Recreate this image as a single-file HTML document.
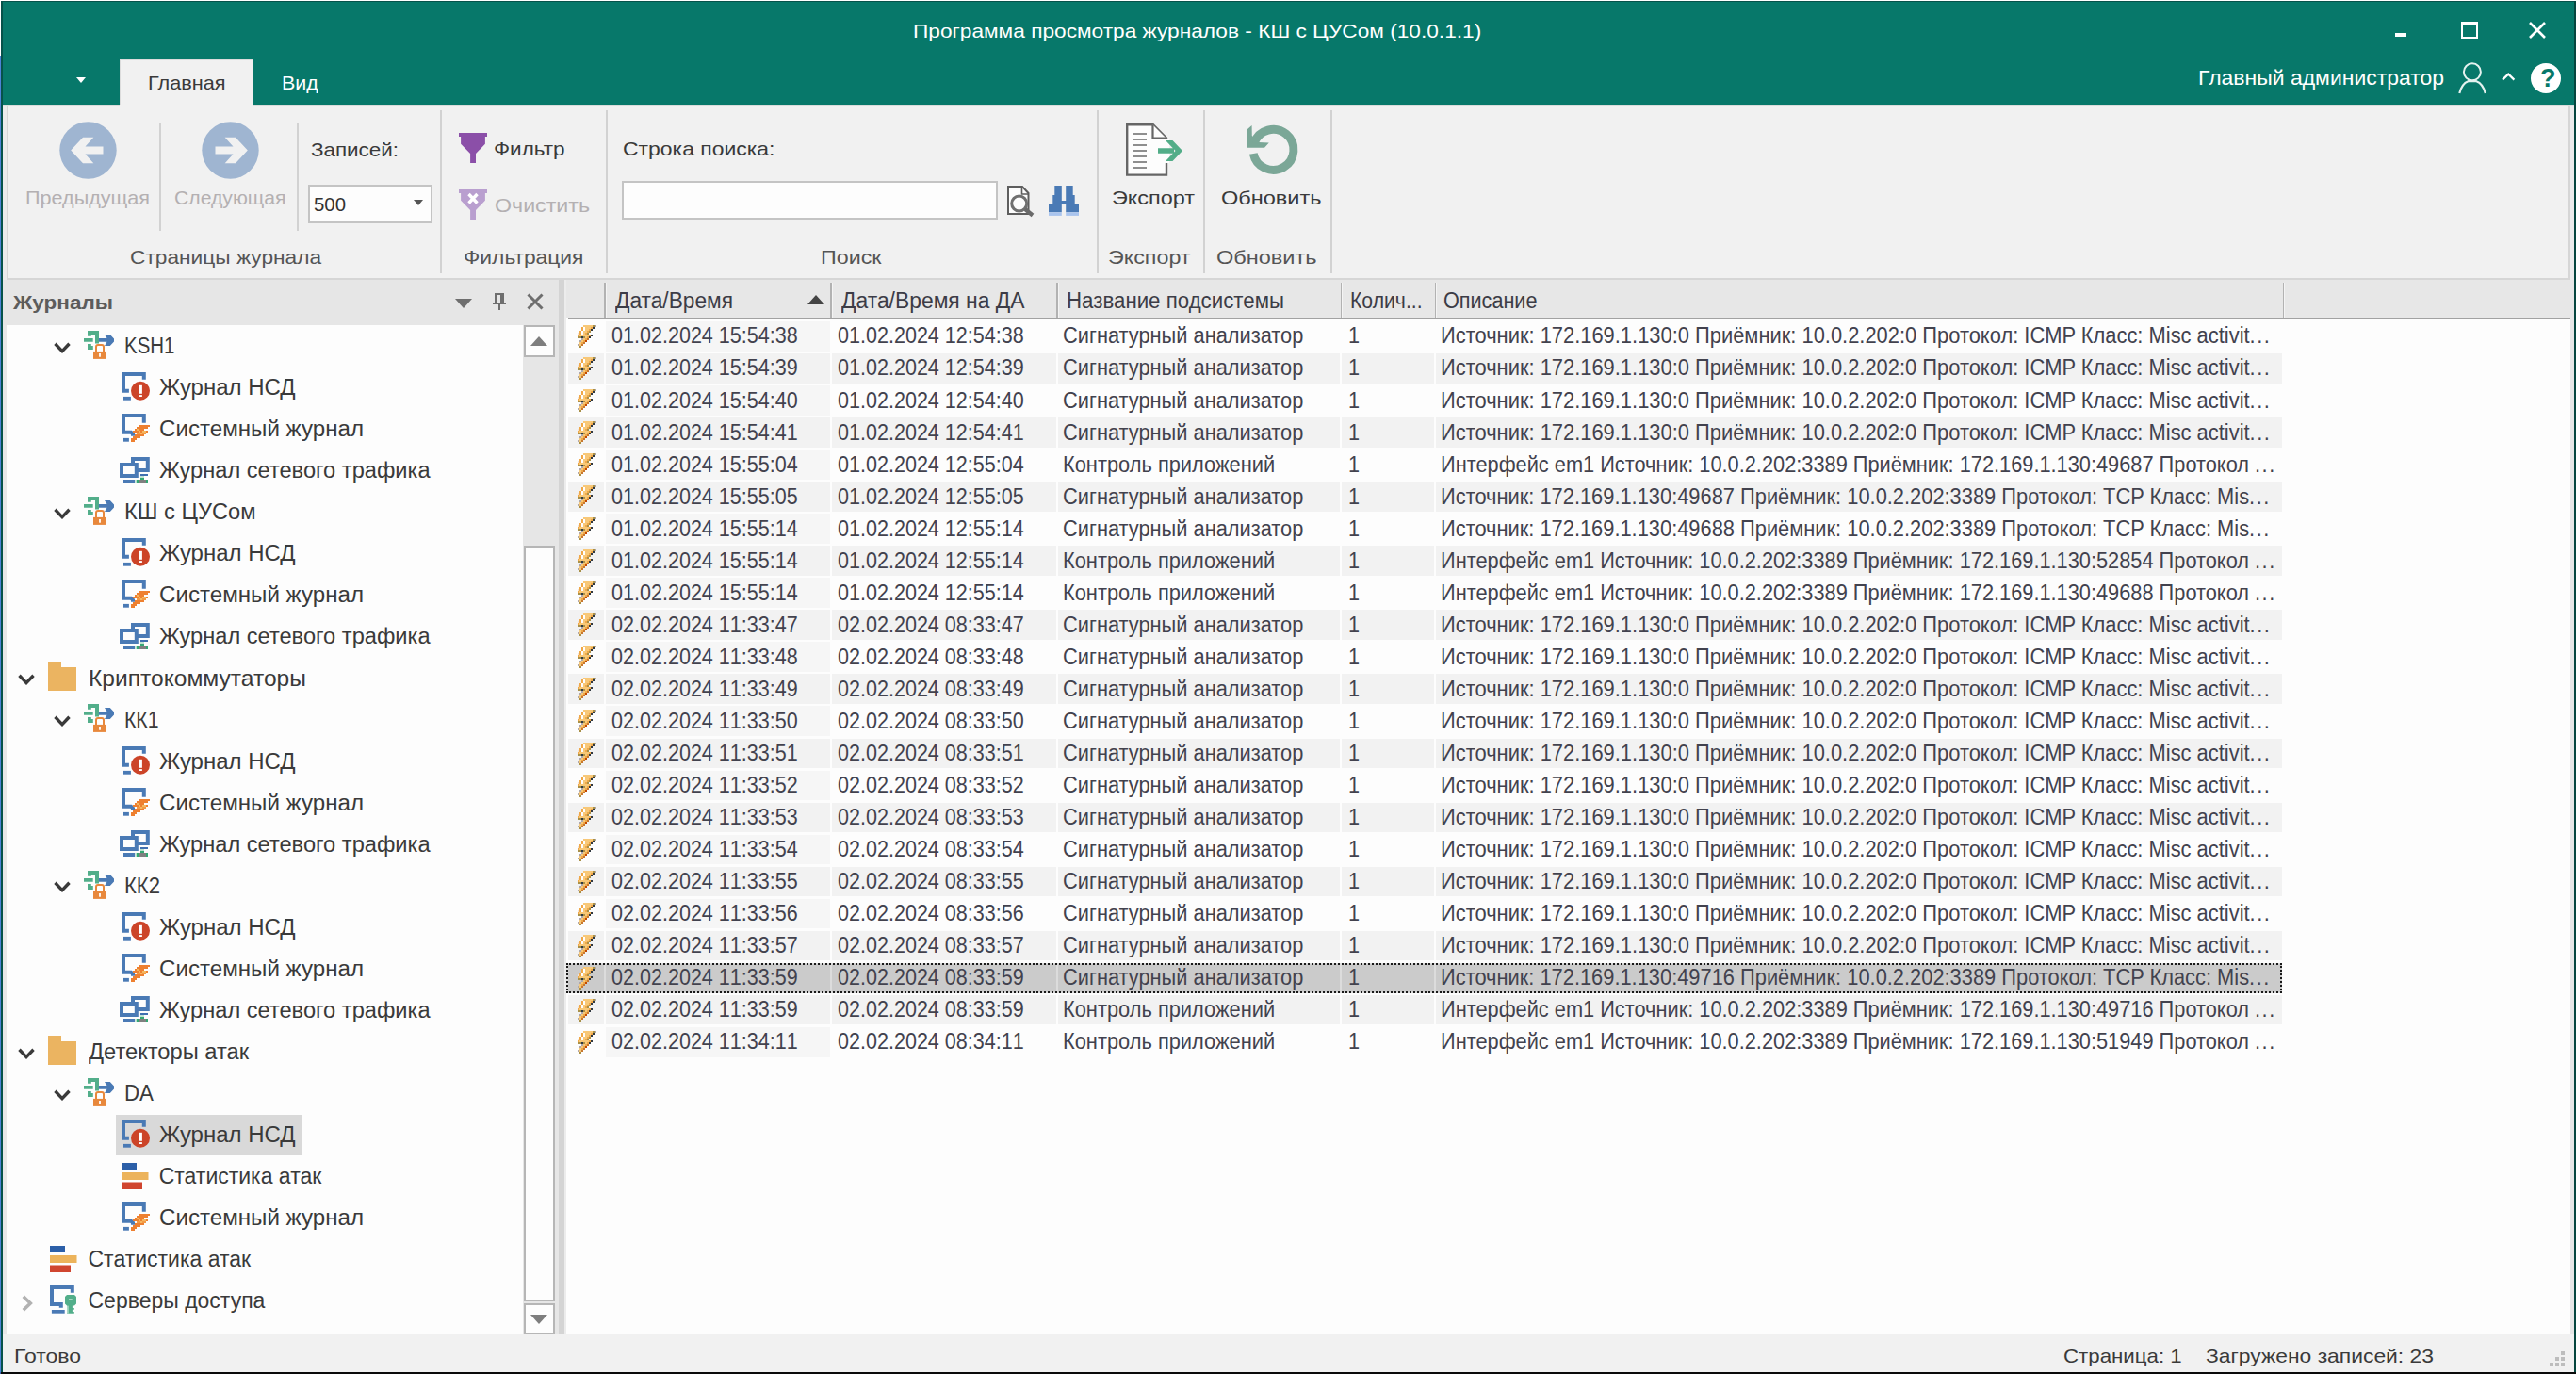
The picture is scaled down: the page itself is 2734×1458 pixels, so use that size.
<!DOCTYPE html>
<html><head><meta charset="utf-8"><title>Log viewer</title><style>html,body{margin:0;padding:0}
body{width:2734px;height:1458px;position:relative;overflow:hidden;background:#f1f1f1;font-family:"Liberation Sans",sans-serif}
body>div,body>span,body>svg{position:absolute}
.t{white-space:nowrap;line-height:1;transform-origin:0 0;display:block}
svg{overflow:visible}
</style></head><body>
<svg width="0" height="0" style="position:absolute"><defs>
<symbol id="gw" viewBox="0 0 32 32">
<path d="M4 0h12v13.600h-4V3.900H7.800v1.800H4zM0 7.900h9.700v3.900H0zM4 14.100h3.800v2h2v3.800H4z" fill="#52ae8a"/>
<path d="M15.900 7.900h8.600L22 3.900h5.800L32 8.400v3L27.800 15.900H22l2.500-4.100h-8.600z" fill="#4a7ab5"/>
<path d="M10 21.900h14v8H10z" fill="#e8883c"/>
<path d="M13 21.900v-4.800q0-2 2-2h4q2 0 2 2v4.800" fill="none" stroke="#e8883c" stroke-width="2"/>
<rect x="16.100" y="24" width="1.800" height="3.700" fill="#fff"/>
</symbol>
<symbol id="nsd" viewBox="0 0 32 32">
<path d="M23.800 7.700V2H2v17.700h5.900" fill="none" stroke="#4a7ab5" stroke-width="4"/>
<rect x="2" y="25.900" width="7.900" height="3.800" fill="#4a7ab5"/>
<circle cx="20" cy="19.800" r="10" fill="#cc4428"/>
<rect x="18.200" y="13.800" width="3.700" height="9" fill="#fff"/><rect x="18.200" y="24.100" width="3.700" height="1.900" fill="#fff"/>
</symbol>
<symbol id="sys" viewBox="0 0 32 32">
<path d="M23.800 9.700V2H2v17.700h8l2 2v2" fill="none" stroke="#4a7ab5" stroke-width="4"/>
<rect x="2" y="25.900" width="5.900" height="3.800" fill="#4a7ab5"/>
<g shape-rendering="crispEdges"><rect x="18" y="12" width="12" height="2.05" fill="#ee8030"/><rect x="16" y="14" width="12" height="2.05" fill="#ee8030"/><rect x="14" y="16" width="10" height="2.05" fill="#ee8030"/><rect x="12" y="18" width="16" height="2.05" fill="#ee8030"/><rect x="16" y="20" width="10" height="2.05" fill="#f29a45"/><rect x="14" y="22" width="10" height="2.05" fill="#ee8030"/><rect x="12" y="24" width="8" height="2.05" fill="#ee8030"/><rect x="10" y="26" width="6" height="2.05" fill="#ee8030"/><rect x="10" y="28" width="4" height="2.05" fill="#ee8030"/><rect x="18" y="18" width="2" height="2" fill="#f4b860"/><rect x="22" y="18" width="4" height="2" fill="#f4b860"/><rect x="20" y="20" width="2" height="2" fill="#f4b860"/><rect x="16" y="16" width="2" height="2" fill="#f4b860"/></g>
</symbol>
<symbol id="srv" viewBox="0 0 32 32">
<path d="M23.800 7.800V2H2v17.900h9.800v3.800" fill="none" stroke="#4a7ab5" stroke-width="4"/>
<rect x="1.900" y="26" width="13.800" height="3.700" fill="#4a7ab5"/>
<path d="M18 9.900h8l2 2v7.700l-2 2h-2.100v2.300h1.900v1.900h-1.900V28h1.900v1.700H18v-8.100l-2-2v-7.700z" fill="#52ae8a"/>
<rect x="18" y="21.600" width="1.800" height="8.100" fill="#a9d7c4"/>
<rect x="20" y="14.200" width="3.700" height="1.600" fill="#b9e0d0"/>
</symbol>
<symbol id="net" viewBox="0 0 32 28">
<rect x="14" y="2" width="15.800" height="12" fill="#fdfdfd" stroke="#4a7ab5" stroke-width="4"/>
<rect x="2" y="8" width="15.800" height="12" fill="#fdfdfd" stroke="#4a7ab5" stroke-width="4"/>
<rect x="22" y="18" width="8" height="2" fill="#3f6fb0"/>
<rect x="22" y="20" width="4" height="2" fill="#bfe3d3"/><rect x="22" y="22" width="4" height="2" fill="#35a874"/>
<rect x="4" y="24" width="12" height="4" fill="#4a7ab5"/>
<rect x="16" y="24" width="1.800" height="4" fill="#cfe9dc"/>
<rect x="17.800" y="24" width="12.200" height="4" fill="#35a874"/><rect x="20" y="24" width="8" height="4" fill="#808080"/>
</symbol>
<symbol id="fold" viewBox="0 0 30 31"><path d="M0 0h14v6h16v25H0z" fill="#ebb461"/></symbol>
<symbol id="stat" viewBox="0 0 29 28"><rect width="16" height="7" fill="#2c5fa8"/><rect y="10" width="28.5" height="8" fill="#ecb35b"/><rect y="20.5" width="22" height="7.5" fill="#d0452f"/></symbol>
<symbol id="chev" viewBox="0 0 18 12"><path d="M1.500 1.800L9 9.600 16.500 1.800" fill="none" stroke="#3a3a3a" stroke-width="3.400"/></symbol>
<symbol id="chevr" viewBox="0 0 12 18"><path d="M1.800 1.800L9.300 9 1.800 16.200" fill="none" stroke="#b2b2b2" stroke-width="3.600"/></symbol>
<symbol id="prev" viewBox="0 0 61 61"><circle cx="30.5" cy="30.5" r="30.2" fill="#9fb5d1"/><path d="M12.2 30.5L25 16.7h11.3L27.5 26.5h19v8h-19l8.8 9.8H25z" fill="#f1f1f1"/></symbol>
<symbol id="filt" viewBox="0 0 30 32"><path d="M0 0h30v3.900h-2.100v7.800L18 22v9.900h-5.900V22L2.100 11.700V3.900H0z"/></symbol>
</defs></svg>
<div style="left:0px;top:0px;width:2734px;height:1px;background:#fff;"></div>
<div style="left:0px;top:0px;width:1px;height:59px;background:#fff;"></div>
<div style="left:0px;top:59px;width:1px;height:1399px;background:#4d82d6;"></div>
<div style="left:1px;top:1px;width:2733px;height:110px;background:#06524a;"></div>
<div style="left:1px;top:1px;width:2px;height:1457px;background:#06524a;"></div>
<div style="left:2732px;top:1px;width:2px;height:1457px;background:#06463f;"></div>
<div style="left:3px;top:2px;width:2729px;height:109px;background:#07786a;"></div>
<div style="left:0px;top:1456px;width:2734px;height:2px;background:#0a0a0a;"></div>
<div style="left:0px;top:1456px;width:1px;height:2px;background:#3a66b0;"></div>
<span class=t style="left:968.5px;top:22.2px;font-size:21px;color:#fff;transform:scaleX(1.080);">Программа просмотра журналов - КШ с ЦУСом (10.0.1.1)</span>
<div style="left:2542px;top:35px;width:12px;height:4px;background:#fff;"></div>
<div style="left:2612px;top:23px;width:14px;height:12px;border:2px solid #fff;border-top-width:4px"></div>
<svg style="left:2683px;top:22px" width="20" height="20"><path d="M2 2L18 18M18 2L2 18" stroke="#fff" stroke-width="2.6" fill="none"/></svg>
<div style="left:127px;top:63px;width:142px;height:50px;background:#f1f1f1;border-top:1px solid #dcdcdc;border-left:1px solid #dcdcdc;border-right:1px solid #dcdcdc;box-sizing:border-box"></div>
<svg style="left:81px;top:81.5px" width="10" height="6"><path d="M0 0h10L5 6z" fill="#fff"/></svg>
<span class=t style="left:156.5px;top:77.2px;font-size:21px;color:#3a3a3a;transform:scaleX(1.032);">Главная</span>
<span class=t style="left:298.5px;top:77.2px;font-size:21px;color:#fff;transform:scaleX(1.020);">Вид</span>
<span class=t style="left:2333.0px;top:71.9px;font-size:22px;color:#fff;transform:scaleX(1.044);">Главный администратор</span>
<svg style="left:2608px;top:65px" width="32" height="36"><circle cx="15.9" cy="11.3" r="9" fill="none" stroke="#e4f2ef" stroke-width="2"/><path d="M2.3 34C4 27 8 22.5 11.5 21.2h8.8C24 22.5 28 27 29.8 34" fill="none" stroke="#e4f2ef" stroke-width="2.2"/></svg>
<svg style="left:2654px;top:76px" width="16" height="10"><path d="M2 8.6L8.2 2.6 14.4 8.6" fill="none" stroke="#fff" stroke-width="2.2"/></svg>
<div style="left:2686px;top:67px;width:32px;height:32px;border-radius:50%;background:#fff"></div>
<span class=t style="left:2696.0px;top:70.1px;font-size:27px;color:#07786a;font-weight:bold;">?</span>
<div style="left:3px;top:111px;width:2729px;height:186px;background:#ebebeb;"></div>
<div style="left:7px;top:111px;width:2721px;height:186px;background:#d6d6d6;"></div>
<div style="left:9px;top:111px;width:2717px;height:184px;background:#f1f1f1;"></div>
<div style="left:128px;top:111px;width:140px;height:3px;background:#f1f1f1;"></div>
<div style="left:3px;top:111px;width:124px;height:1.5px;background:#d9dcdb;"></div>
<div style="left:269px;top:111px;width:2463px;height:1.5px;background:#d9dcdb;"></div>
<svg style="left:62.5px;top:128.5px" width="61" height="61" ><use href="#prev"/></svg>
<svg style="left:214.3px;top:128.5px" width="61" height="61"><use href="#prev" transform="translate(61 0) scale(-1 1)"/></svg>
<div style="left:169px;top:131px;width:2px;height:114px;background:#d2d2d2;"></div>
<div style="left:314.5px;top:131px;width:2px;height:114px;background:#d2d2d2;"></div>
<span class=t style="left:26.5px;top:198.5px;font-size:21px;color:#b4b0b2;transform:scaleX(1.028);">Предыдущая</span>
<span class=t style="left:184.5px;top:198.5px;font-size:21px;color:#b4b0b2;transform:scaleX(1.009);">Следующая</span>
<span class=t style="left:329.5px;top:148.2px;font-size:21px;color:#3a3a3a;transform:scaleX(1.066);">Записей:</span>
<div style="left:327px;top:196px;width:128px;height:37px;background:#fdfdfd;border:2px solid #c4c4c4"></div>
<span class=t style="left:332.5px;top:206.2px;font-size:21px;color:#333;transform:scaleX(0.970);">500</span>
<svg style="left:439px;top:212px" width="10" height="6"><path d="M0 0h10L5 6z" fill="#555"/></svg>
<span class=t style="left:137.5px;top:262.2px;font-size:21px;color:#555;transform:scaleX(1.081);">Страницы журнала</span>
<div style="left:467px;top:117px;width:2px;height:173px;background:#d2d2d2;"></div>
<div style="left:643px;top:117px;width:2px;height:173px;background:#d2d2d2;"></div>
<div style="left:1163.5px;top:117px;width:2px;height:173px;background:#d2d2d2;"></div>
<div style="left:1277px;top:117px;width:2px;height:173px;background:#d2d2d2;"></div>
<div style="left:1412px;top:117px;width:2px;height:173px;background:#d2d2d2;"></div>
<svg style="left:487px;top:141px" width="30" height="32"><use href="#filt" fill="#8b4fa8"/></svg>
<svg style="left:487px;top:201px" width="30" height="32"><use href="#filt" fill="#b99fcf"/><path d="M10.5 5l9 9.5M19.5 5l-9 9.5" stroke="#fff" stroke-width="3.4"/></svg>
<span class=t style="left:523.7px;top:146.9px;font-size:21px;color:#3a3a3a;transform:scaleX(1.072);">Фильтр</span>
<span class=t style="left:524.5px;top:206.8px;font-size:21px;color:#b4b0b2;transform:scaleX(1.105);">Очистить</span>
<span class=t style="left:491.5px;top:262.2px;font-size:21px;color:#555;transform:scaleX(1.086);">Фильтрация</span>
<span class=t style="left:660.5px;top:146.7px;font-size:21px;color:#3a3a3a;transform:scaleX(1.093);">Строка поиска:</span>
<div style="left:659.5px;top:191.5px;width:395.5px;height:37px;background:#fdfdfd;border:2px solid #c4c4c4"></div>
<svg style="left:1068px;top:196px" width="32" height="36"><path d="M2 2h15l6.5 7v22H2z" fill="#fdfdfd" stroke="#5e5e5e" stroke-width="2"/><path d="M16.5 2.5v7.5h7" fill="none" stroke="#5e5e5e" stroke-width="1.6"/><circle cx="13.700" cy="20" r="8" fill="#fdfdfd" stroke="#707070" stroke-width="3"/><path d="M20 26l8 6.500" stroke="#6a6a6a" stroke-width="4.200"/></svg>
<svg style="left:1113px;top:197px" width="32" height="32"><path d="M6.3 0h7.5v16h4.4V0h7.5v10h2v10h4.3v8.3H18.2V20h-4.4v8.3H0V20h4.3V10h2z" fill="#4a7ab5"/><rect y="28.3" width="13.8" height="3.6" fill="#a9c4ee"/><rect x="18.2" y="28.3" width="13.8" height="3.6" fill="#a9c4ee"/></svg>
<span class=t style="left:870.5px;top:262.2px;font-size:21px;color:#555;transform:scaleX(1.108);">Поиск</span>
<svg style="left:1195px;top:131px" width="62" height="57"><path d="M1.2 1.2h27.6L43 15.5V54.600H1.2z" fill="#fdfdfd" stroke="#666" stroke-width="2.4"/><path d="M28.5 1.5V15.5H42.5" fill="#fdfdfd" stroke="#666" stroke-width="2.2"/><rect x="40" y="17" width="6" height="25" fill="#fdfdfd"/><rect x="8" y="10" width="14" height="2" fill="#8e8e8e"/><rect x="8" y="16" width="14" height="2" fill="#8e8e8e"/><rect x="8" y="22" width="14" height="2" fill="#8e8e8e"/><rect x="8" y="28" width="14" height="2" fill="#8e8e8e"/><rect x="8" y="34" width="14" height="2" fill="#8e8e8e"/><rect x="8" y="40" width="14" height="2" fill="#8e8e8e"/><rect x="8" y="46" width="14" height="2" fill="#8e8e8e"/><path d="M34 26.2h17v5.6H34z M42 18h7.5L60 29 49.500 40H42l10.500-11z" fill="#52ad88"/></svg>
<span class=t style="left:1179.5px;top:198.7px;font-size:21px;color:#3a3a3a;transform:scaleX(1.115);">Экспорт</span>
<span class=t style="left:1175.5px;top:262.2px;font-size:21px;color:#555;transform:scaleX(1.109);">Экспорт</span>
<svg style="left:1323px;top:133px" width="56" height="53"><path d="M0.200 4.700L5.600 -0.100 5.800 11 13 18 23.800 18.500 19 23.800H0.200z" fill="#7ba797"/><path d="M8.150 18.530A21.550 21.550 0 1 1 7.250 30" fill="none" stroke="#7ba797" stroke-width="8.900"/></svg>
<span class=t style="left:1295.5px;top:198.7px;font-size:21px;color:#3a3a3a;transform:scaleX(1.120);">Обновить</span>
<span class=t style="left:1291.0px;top:262.2px;font-size:21px;color:#555;transform:scaleX(1.120);">Обновить</span>
<div style="left:3px;top:297px;width:4px;height:1119px;background:#e8e8e8;"></div>
<div style="left:3px;top:297px;width:590px;height:48px;background:#e6e6e6;"></div>
<span class=t style="left:13.5px;top:310.2px;font-size:21px;color:#5c5c5c;transform:scaleX(1.072);font-weight:bold;">Журналы</span>
<svg style="left:483px;top:317px" width="18" height="10"><path d="M0 0h18L9 10z" fill="#6e6e6e"/></svg>
<svg style="left:523px;top:311px" width="14" height="18"><path d="M2 0h10v10.200h2v1.800H8v6H6v-6H0v-1.800h2zM4 2v8.200h4V2z" fill="#6e6e6e"/></svg>
<svg style="left:559px;top:311px" width="18" height="18"><path d="M1.5 1.5L16.500 16.500M16.500 1.500L1.500 16.500" stroke="#6e6e6e" stroke-width="3"/></svg>
<div style="left:7px;top:345px;width:548px;height:1071px;background:#fdfdfd;"></div>
<div style="left:555px;top:345px;width:38px;height:1071px;background:#e6e6e6;"></div>
<div style="left:555.5px;top:345px;width:29.500px;height:30px;background:#fdfdfd;border:2px solid #b6b6b6"></div>
<svg style="left:563px;top:357px" width="18" height="10"><path d="M0 10h18L9 0z" fill="#7e7e7e"/></svg>
<div style="left:555.5px;top:579px;width:29.500px;height:798px;background:#fdfdfd;border:2px solid #b6b6b6"></div>
<div style="left:555.5px;top:1383px;width:29.500px;height:29px;background:#fdfdfd;border:2px solid #b6b6b6"></div>
<svg style="left:563px;top:1395px" width="18" height="10"><path d="M0 0h18L9 10z" fill="#7e7e7e"/></svg>
<div style="left:593px;top:297px;width:6px;height:1119px;background:#d4d4d4;"></div>
<div style="left:599px;top:297px;width:2px;height:1119px;background:#ececec;"></div>
<svg style="left:57px;top:362.9px" width="18" height="12" ><use href="#chev"/></svg>
<svg style="left:89px;top:351.1px" width="32" height="32" ><use href="#gw"/></svg>
<span class=t style="left:131.7px;top:356.1px;font-size:23px;color:#3a3a3a;transform:scaleX(0.890);">KSH1</span>
<svg style="left:129px;top:395.14000000000004px" width="32" height="32" ><use href="#nsd"/></svg>
<span class=t style="left:168.7px;top:400.2px;font-size:23px;color:#3a3a3a;transform:scaleX(1.043);">Журнал НСД</span>
<svg style="left:129px;top:439.18px" width="32" height="32" ><use href="#sys"/></svg>
<span class=t style="left:168.7px;top:444.2px;font-size:23px;color:#3a3a3a;transform:scaleX(1.049);">Системный журнал</span>
<svg style="left:127px;top:484.92px" width="32" height="28" ><use href="#net"/></svg>
<span class=t style="left:168.7px;top:488.3px;font-size:23px;color:#3a3a3a;transform:scaleX(1.027);">Журнал сетевого трафика</span>
<svg style="left:57px;top:539.06px" width="18" height="12" ><use href="#chev"/></svg>
<svg style="left:89px;top:527.26px" width="32" height="32" ><use href="#gw"/></svg>
<span class=t style="left:131.7px;top:532.3px;font-size:23px;color:#3a3a3a;transform:scaleX(1.029);">КШ с ЦУСом</span>
<svg style="left:129px;top:571.3000000000001px" width="32" height="32" ><use href="#nsd"/></svg>
<span class=t style="left:168.7px;top:576.3px;font-size:23px;color:#3a3a3a;transform:scaleX(1.043);">Журнал НСД</span>
<svg style="left:129px;top:615.34px" width="32" height="32" ><use href="#sys"/></svg>
<span class=t style="left:168.7px;top:620.4px;font-size:23px;color:#3a3a3a;transform:scaleX(1.049);">Системный журнал</span>
<svg style="left:127px;top:661.0799999999999px" width="32" height="28" ><use href="#net"/></svg>
<span class=t style="left:168.7px;top:664.4px;font-size:23px;color:#3a3a3a;transform:scaleX(1.027);">Журнал сетевого трафика</span>
<svg style="left:19px;top:715.2199999999999px" width="18" height="12" ><use href="#chev"/></svg>
<svg style="left:51px;top:702.2199999999999px" width="30" height="31" ><use href="#fold"/></svg>
<span class=t style="left:93.5px;top:708.5px;font-size:23px;color:#3a3a3a;transform:scaleX(1.069);">Криптокоммутаторы</span>
<svg style="left:57px;top:759.26px" width="18" height="12" ><use href="#chev"/></svg>
<svg style="left:89px;top:747.46px" width="32" height="32" ><use href="#gw"/></svg>
<span class=t style="left:131.7px;top:752.5px;font-size:23px;color:#3a3a3a;transform:scaleX(0.922);">КК1</span>
<svg style="left:129px;top:791.5px" width="32" height="32" ><use href="#nsd"/></svg>
<span class=t style="left:168.7px;top:796.5px;font-size:23px;color:#3a3a3a;transform:scaleX(1.043);">Журнал НСД</span>
<svg style="left:129px;top:835.5400000000001px" width="32" height="32" ><use href="#sys"/></svg>
<span class=t style="left:168.7px;top:840.6px;font-size:23px;color:#3a3a3a;transform:scaleX(1.049);">Системный журнал</span>
<svg style="left:127px;top:881.28px" width="32" height="28" ><use href="#net"/></svg>
<span class=t style="left:168.7px;top:884.6px;font-size:23px;color:#3a3a3a;transform:scaleX(1.027);">Журнал сетевого трафика</span>
<svg style="left:57px;top:935.42px" width="18" height="12" ><use href="#chev"/></svg>
<svg style="left:89px;top:923.62px" width="32" height="32" ><use href="#gw"/></svg>
<span class=t style="left:131.7px;top:928.7px;font-size:23px;color:#3a3a3a;transform:scaleX(0.960);">КК2</span>
<svg style="left:129px;top:967.66px" width="32" height="32" ><use href="#nsd"/></svg>
<span class=t style="left:168.7px;top:972.7px;font-size:23px;color:#3a3a3a;transform:scaleX(1.043);">Журнал НСД</span>
<svg style="left:129px;top:1011.6999999999999px" width="32" height="32" ><use href="#sys"/></svg>
<span class=t style="left:168.7px;top:1016.7px;font-size:23px;color:#3a3a3a;transform:scaleX(1.049);">Системный журнал</span>
<svg style="left:127px;top:1057.4399999999998px" width="32" height="28" ><use href="#net"/></svg>
<span class=t style="left:168.7px;top:1060.8px;font-size:23px;color:#3a3a3a;transform:scaleX(1.027);">Журнал сетевого трафика</span>
<svg style="left:19px;top:1111.58px" width="18" height="12" ><use href="#chev"/></svg>
<svg style="left:51px;top:1098.58px" width="30" height="31" ><use href="#fold"/></svg>
<span class=t style="left:93.5px;top:1104.8px;font-size:23px;color:#3a3a3a;transform:scaleX(1.029);">Детекторы атак</span>
<svg style="left:57px;top:1155.6200000000001px" width="18" height="12" ><use href="#chev"/></svg>
<svg style="left:89px;top:1143.82px" width="32" height="32" ><use href="#gw"/></svg>
<span class=t style="left:131.7px;top:1148.9px;font-size:23px;color:#3a3a3a;transform:scaleX(0.970);">DA</span>
<div style="left:123px;top:1182.66px;width:198px;height:43px;background:#d9d9d9;"></div>
<svg style="left:129px;top:1187.86px" width="32" height="32" ><use href="#nsd"/></svg>
<span class=t style="left:168.7px;top:1192.9px;font-size:23px;color:#3a3a3a;transform:scaleX(1.043);">Журнал НСД</span>
<svg style="left:129px;top:1234.1px" width="29" height="28" ><use href="#stat"/></svg>
<span class=t style="left:168.7px;top:1236.9px;font-size:23px;color:#3a3a3a;">Статистика атак</span>
<svg style="left:129px;top:1275.94px" width="32" height="32" ><use href="#sys"/></svg>
<span class=t style="left:168.7px;top:1281.0px;font-size:23px;color:#3a3a3a;transform:scaleX(1.049);">Системный журнал</span>
<svg style="left:53px;top:1322.18px" width="29" height="28" ><use href="#stat"/></svg>
<span class=t style="left:93.5px;top:1325.0px;font-size:23px;color:#3a3a3a;">Статистика атак</span>
<svg style="left:23px;top:1374.3200000000002px" width="12" height="18" ><use href="#chevr"/></svg>
<svg style="left:53.1px;top:1364.02px" width="32" height="32" ><use href="#srv"/></svg>
<span class=t style="left:93.5px;top:1369.1px;font-size:23px;color:#3a3a3a;">Серверы доступа</span>
<div style="left:601px;top:297px;width:2127px;height:1119px;background:#fdfdfd;"></div>
<div style="left:2728px;top:297px;width:4px;height:1119px;background:#e6e6e6;"></div>
<div style="left:601px;top:297px;width:2127px;height:40px;background:#e7e7e7;"></div>
<div style="left:603px;top:337px;width:2125px;height:2px;background:#a2a2a2;"></div>
<div style="left:641px;top:300px;width:1.5px;height:37px;background:#b2b2b2;"></div>
<div style="left:642.5px;top:300px;width:1px;height:37px;background:#f4f4f4;"></div>
<div style="left:881px;top:300px;width:1.5px;height:37px;background:#b2b2b2;"></div>
<div style="left:882.5px;top:300px;width:1px;height:37px;background:#f4f4f4;"></div>
<div style="left:1121px;top:300px;width:1.5px;height:37px;background:#b2b2b2;"></div>
<div style="left:1122.5px;top:300px;width:1px;height:37px;background:#f4f4f4;"></div>
<div style="left:1422.5px;top:300px;width:1.5px;height:37px;background:#b2b2b2;"></div>
<div style="left:1424.0px;top:300px;width:1px;height:37px;background:#f4f4f4;"></div>
<div style="left:1522.5px;top:300px;width:1.5px;height:37px;background:#b2b2b2;"></div>
<div style="left:1524.0px;top:300px;width:1px;height:37px;background:#f4f4f4;"></div>
<div style="left:2422.5px;top:300px;width:1.5px;height:37px;background:#b2b2b2;"></div>
<div style="left:2424.0px;top:300px;width:1px;height:37px;background:#f4f4f4;"></div>
<span class=t style="left:652.5px;top:307.5px;font-size:23px;color:#3c3c46;transform:scaleX(0.988);">Дата/Время</span>
<span class=t style="left:892.5px;top:307.5px;font-size:23px;color:#3c3c46;transform:scaleX(0.994);">Дата/Время на ДА</span>
<span class=t style="left:1132.0px;top:307.5px;font-size:23px;color:#3c3c46;transform:scaleX(0.968);">Название подсистемы</span>
<span class=t style="left:1433.0px;top:307.5px;font-size:23px;color:#3c3c46;transform:scaleX(0.921);">Колич...</span>
<span class=t style="left:1532.0px;top:307.5px;font-size:23px;color:#3c3c46;transform:scaleX(0.940);">Описание</span>
<svg style="left:857px;top:313px" width="18" height="10"><path d="M0 10h18L9 0z" fill="#444"/></svg>
<svg width="0" height="0" style="position:absolute"><defs><symbol id="bolt" viewBox="0 0 20 24" shape-rendering="crispEdges"><rect x="6" y="0" width="2" height="2" fill="#f8c878"/><rect x="8" y="0" width="2" height="2" fill="#f8c878"/><rect x="10" y="0" width="2" height="2" fill="#f8c878"/><rect x="12" y="0" width="2" height="2" fill="#f8c878"/><rect x="14" y="0" width="2" height="2" fill="#f8c878"/><rect x="16" y="0" width="2" height="2" fill="#a89048"/><rect x="18" y="0" width="2" height="2" fill="#b0a8a8"/><rect x="4" y="2" width="2" height="2" fill="#f0a848"/><rect x="6" y="2" width="2" height="2" fill="#ffffff"/><rect x="8" y="2" width="2" height="2" fill="#f8c878"/><rect x="10" y="2" width="2" height="2" fill="#f8c878"/><rect x="12" y="2" width="2" height="2" fill="#f8c878"/><rect x="14" y="2" width="2" height="2" fill="#f0a848"/><rect x="16" y="2" width="2" height="2" fill="#303840"/><rect x="4" y="4" width="2" height="2" fill="#f0a848"/><rect x="6" y="4" width="2" height="2" fill="#ffffff"/><rect x="8" y="4" width="2" height="2" fill="#f8c878"/><rect x="10" y="4" width="2" height="2" fill="#f8c878"/><rect x="12" y="4" width="2" height="2" fill="#f0a848"/><rect x="14" y="4" width="2" height="2" fill="#303840"/><rect x="2" y="6" width="2" height="2" fill="#f0a848"/><rect x="4" y="6" width="2" height="2" fill="#ffffff"/><rect x="6" y="6" width="2" height="2" fill="#f8c878"/><rect x="8" y="6" width="2" height="2" fill="#f8c878"/><rect x="10" y="6" width="2" height="2" fill="#f0a848"/><rect x="12" y="6" width="2" height="2" fill="#a89048"/><rect x="0" y="8" width="2" height="2" fill="#f3e4d4"/><rect x="2" y="8" width="2" height="2" fill="#f0a848"/><rect x="4" y="8" width="2" height="2" fill="#ffffff"/><rect x="6" y="8" width="2" height="2" fill="#f8c878"/><rect x="8" y="8" width="2" height="2" fill="#f0a848"/><rect x="10" y="8" width="2" height="2" fill="#a89048"/><rect x="0" y="10" width="2" height="2" fill="#f0a848"/><rect x="2" y="10" width="2" height="2" fill="#f8c878"/><rect x="4" y="10" width="2" height="2" fill="#f8c878"/><rect x="6" y="10" width="2" height="2" fill="#f8c878"/><rect x="8" y="10" width="2" height="2" fill="#f8c878"/><rect x="10" y="10" width="2" height="2" fill="#f8c878"/><rect x="12" y="10" width="2" height="2" fill="#f0a848"/><rect x="14" y="10" width="2" height="2" fill="#303840"/><rect x="0" y="12" width="2" height="2" fill="#a89048"/><rect x="2" y="12" width="2" height="2" fill="#a89048"/><rect x="4" y="12" width="2" height="2" fill="#303840"/><rect x="6" y="12" width="2" height="2" fill="#a89048"/><rect x="8" y="12" width="2" height="2" fill="#f8c878"/><rect x="10" y="12" width="2" height="2" fill="#f0a848"/><rect x="12" y="12" width="2" height="2" fill="#303840"/><rect x="4" y="14" width="2" height="2" fill="#b0a8a8"/><rect x="6" y="14" width="2" height="2" fill="#f8c878"/><rect x="8" y="14" width="2" height="2" fill="#f0a848"/><rect x="10" y="14" width="2" height="2" fill="#c87830"/><rect x="2" y="16" width="2" height="2" fill="#b0a8a8"/><rect x="4" y="16" width="2" height="2" fill="#f8c878"/><rect x="6" y="16" width="2" height="2" fill="#f0a848"/><rect x="8" y="16" width="2" height="2" fill="#c04800"/><rect x="2" y="18" width="2" height="2" fill="#f8c878"/><rect x="4" y="18" width="2" height="2" fill="#f0a848"/><rect x="6" y="18" width="2" height="2" fill="#c87830"/><rect x="0" y="20" width="2" height="2" fill="#b0a8a8"/><rect x="2" y="20" width="2" height="2" fill="#f8c878"/><rect x="4" y="20" width="2" height="2" fill="#c87830"/><rect x="2" y="22" width="2" height="2" fill="#a89048"/></symbol></defs></svg>
<div style="left:643px;top:340.95px;width:238px;height:31.6px;background:#f6f6f6;"></div>
<svg style="left:613px;top:344.95px" width="20" height="24" ><use href="#bolt"/></svg>
<span class=t style="left:648.5px;top:345.4px;font-size:23px;color:#42424e;transform:scaleX(0.937);font-kerning:none;">01.02.2024 15:54:38</span>
<span class=t style="left:888.5px;top:345.4px;font-size:23px;color:#42424e;transform:scaleX(0.937);font-kerning:none;">01.02.2024 12:54:38</span>
<span class=t style="left:1127.8px;top:345.4px;font-size:23px;color:#42424e;transform:scaleX(0.948);">Сигнатурный анализатор</span>
<span class=t style="left:1430.5px;top:345.4px;font-size:23px;color:#42424e;transform:scaleX(0.940);">1</span>
<span class=t style="left:1529.0px;top:345.4px;font-size:23px;color:#42424e;transform:scaleX(0.952);">Источник: 172.169.1.130:0 Приёмник: 10.0.2.202:0 Протокол: ICMP Класс: Misc activit<span style="letter-spacing:1.6px">...</span></span>
<div style="left:603px;top:374.995px;width:38px;height:31.6px;background:#f2f2f2;"></div>
<div style="left:643px;top:374.995px;width:238px;height:31.6px;background:#f2f2f2;"></div>
<div style="left:883px;top:374.995px;width:238px;height:31.6px;background:#f2f2f2;"></div>
<div style="left:1123px;top:374.995px;width:299px;height:31.6px;background:#f2f2f2;"></div>
<div style="left:1424px;top:374.995px;width:98px;height:31.6px;background:#f2f2f2;"></div>
<div style="left:1524px;top:374.995px;width:898px;height:31.6px;background:#f2f2f2;"></div>
<svg style="left:613px;top:378.995px" width="20" height="24" ><use href="#bolt"/></svg>
<span class=t style="left:648.5px;top:379.4px;font-size:23px;color:#42424e;transform:scaleX(0.937);font-kerning:none;">01.02.2024 15:54:39</span>
<span class=t style="left:888.5px;top:379.4px;font-size:23px;color:#42424e;transform:scaleX(0.937);font-kerning:none;">01.02.2024 12:54:39</span>
<span class=t style="left:1127.8px;top:379.4px;font-size:23px;color:#42424e;transform:scaleX(0.948);">Сигнатурный анализатор</span>
<span class=t style="left:1430.5px;top:379.4px;font-size:23px;color:#42424e;transform:scaleX(0.940);">1</span>
<span class=t style="left:1529.0px;top:379.4px;font-size:23px;color:#42424e;transform:scaleX(0.952);">Источник: 172.169.1.130:0 Приёмник: 10.0.2.202:0 Протокол: ICMP Класс: Misc activit<span style="letter-spacing:1.6px">...</span></span>
<div style="left:643px;top:409.03999999999996px;width:238px;height:31.6px;background:#f6f6f6;"></div>
<svg style="left:613px;top:413.03999999999996px" width="20" height="24" ><use href="#bolt"/></svg>
<span class=t style="left:648.5px;top:413.5px;font-size:23px;color:#42424e;transform:scaleX(0.937);font-kerning:none;">01.02.2024 15:54:40</span>
<span class=t style="left:888.5px;top:413.5px;font-size:23px;color:#42424e;transform:scaleX(0.937);font-kerning:none;">01.02.2024 12:54:40</span>
<span class=t style="left:1127.8px;top:413.5px;font-size:23px;color:#42424e;transform:scaleX(0.948);">Сигнатурный анализатор</span>
<span class=t style="left:1430.5px;top:413.5px;font-size:23px;color:#42424e;transform:scaleX(0.940);">1</span>
<span class=t style="left:1529.0px;top:413.5px;font-size:23px;color:#42424e;transform:scaleX(0.952);">Источник: 172.169.1.130:0 Приёмник: 10.0.2.202:0 Протокол: ICMP Класс: Misc activit<span style="letter-spacing:1.6px">...</span></span>
<div style="left:603px;top:443.085px;width:38px;height:31.6px;background:#f2f2f2;"></div>
<div style="left:643px;top:443.085px;width:238px;height:31.6px;background:#f2f2f2;"></div>
<div style="left:883px;top:443.085px;width:238px;height:31.6px;background:#f2f2f2;"></div>
<div style="left:1123px;top:443.085px;width:299px;height:31.6px;background:#f2f2f2;"></div>
<div style="left:1424px;top:443.085px;width:98px;height:31.6px;background:#f2f2f2;"></div>
<div style="left:1524px;top:443.085px;width:898px;height:31.6px;background:#f2f2f2;"></div>
<svg style="left:613px;top:447.085px" width="20" height="24" ><use href="#bolt"/></svg>
<span class=t style="left:648.5px;top:447.5px;font-size:23px;color:#42424e;transform:scaleX(0.937);font-kerning:none;">01.02.2024 15:54:41</span>
<span class=t style="left:888.5px;top:447.5px;font-size:23px;color:#42424e;transform:scaleX(0.937);font-kerning:none;">01.02.2024 12:54:41</span>
<span class=t style="left:1127.8px;top:447.5px;font-size:23px;color:#42424e;transform:scaleX(0.948);">Сигнатурный анализатор</span>
<span class=t style="left:1430.5px;top:447.5px;font-size:23px;color:#42424e;transform:scaleX(0.940);">1</span>
<span class=t style="left:1529.0px;top:447.5px;font-size:23px;color:#42424e;transform:scaleX(0.952);">Источник: 172.169.1.130:0 Приёмник: 10.0.2.202:0 Протокол: ICMP Класс: Misc activit<span style="letter-spacing:1.6px">...</span></span>
<div style="left:643px;top:477.13px;width:238px;height:31.6px;background:#f6f6f6;"></div>
<svg style="left:613px;top:481.13px" width="20" height="24" ><use href="#bolt"/></svg>
<span class=t style="left:648.5px;top:481.6px;font-size:23px;color:#42424e;transform:scaleX(0.937);font-kerning:none;">01.02.2024 15:55:04</span>
<span class=t style="left:888.5px;top:481.6px;font-size:23px;color:#42424e;transform:scaleX(0.937);font-kerning:none;">01.02.2024 12:55:04</span>
<span class=t style="left:1127.8px;top:481.6px;font-size:23px;color:#42424e;transform:scaleX(0.949);">Контроль приложений</span>
<span class=t style="left:1430.5px;top:481.6px;font-size:23px;color:#42424e;transform:scaleX(0.940);">1</span>
<span class=t style="left:1529.0px;top:481.6px;font-size:23px;color:#42424e;transform:scaleX(0.947);">Интерфейс em1 Источник: 10.0.2.202:3389 Приёмник: 172.169.1.130:49687 Протокол <span style="letter-spacing:1.6px">...</span></span>
<div style="left:603px;top:511.175px;width:38px;height:31.6px;background:#f2f2f2;"></div>
<div style="left:643px;top:511.175px;width:238px;height:31.6px;background:#f2f2f2;"></div>
<div style="left:883px;top:511.175px;width:238px;height:31.6px;background:#f2f2f2;"></div>
<div style="left:1123px;top:511.175px;width:299px;height:31.6px;background:#f2f2f2;"></div>
<div style="left:1424px;top:511.175px;width:98px;height:31.6px;background:#f2f2f2;"></div>
<div style="left:1524px;top:511.175px;width:898px;height:31.6px;background:#f2f2f2;"></div>
<svg style="left:613px;top:515.175px" width="20" height="24" ><use href="#bolt"/></svg>
<span class=t style="left:648.5px;top:515.6px;font-size:23px;color:#42424e;transform:scaleX(0.937);font-kerning:none;">01.02.2024 15:55:05</span>
<span class=t style="left:888.5px;top:515.6px;font-size:23px;color:#42424e;transform:scaleX(0.937);font-kerning:none;">01.02.2024 12:55:05</span>
<span class=t style="left:1127.8px;top:515.6px;font-size:23px;color:#42424e;transform:scaleX(0.948);">Сигнатурный анализатор</span>
<span class=t style="left:1430.5px;top:515.6px;font-size:23px;color:#42424e;transform:scaleX(0.940);">1</span>
<span class=t style="left:1529.0px;top:515.6px;font-size:23px;color:#42424e;transform:scaleX(0.950);">Источник: 172.169.1.130:49687 Приёмник: 10.0.2.202:3389 Протокол: TCP Класс: Mis<span style="letter-spacing:1.6px">...</span></span>
<div style="left:643px;top:545.22px;width:238px;height:31.6px;background:#f6f6f6;"></div>
<svg style="left:613px;top:549.22px" width="20" height="24" ><use href="#bolt"/></svg>
<span class=t style="left:648.5px;top:549.7px;font-size:23px;color:#42424e;transform:scaleX(0.937);font-kerning:none;">01.02.2024 15:55:14</span>
<span class=t style="left:888.5px;top:549.7px;font-size:23px;color:#42424e;transform:scaleX(0.937);font-kerning:none;">01.02.2024 12:55:14</span>
<span class=t style="left:1127.8px;top:549.7px;font-size:23px;color:#42424e;transform:scaleX(0.948);">Сигнатурный анализатор</span>
<span class=t style="left:1430.5px;top:549.7px;font-size:23px;color:#42424e;transform:scaleX(0.940);">1</span>
<span class=t style="left:1529.0px;top:549.7px;font-size:23px;color:#42424e;transform:scaleX(0.950);">Источник: 172.169.1.130:49688 Приёмник: 10.0.2.202:3389 Протокол: TCP Класс: Mis<span style="letter-spacing:1.6px">...</span></span>
<div style="left:603px;top:579.265px;width:38px;height:31.6px;background:#f2f2f2;"></div>
<div style="left:643px;top:579.265px;width:238px;height:31.6px;background:#f2f2f2;"></div>
<div style="left:883px;top:579.265px;width:238px;height:31.6px;background:#f2f2f2;"></div>
<div style="left:1123px;top:579.265px;width:299px;height:31.6px;background:#f2f2f2;"></div>
<div style="left:1424px;top:579.265px;width:98px;height:31.6px;background:#f2f2f2;"></div>
<div style="left:1524px;top:579.265px;width:898px;height:31.6px;background:#f2f2f2;"></div>
<svg style="left:613px;top:583.265px" width="20" height="24" ><use href="#bolt"/></svg>
<span class=t style="left:648.5px;top:583.7px;font-size:23px;color:#42424e;transform:scaleX(0.937);font-kerning:none;">01.02.2024 15:55:14</span>
<span class=t style="left:888.5px;top:583.7px;font-size:23px;color:#42424e;transform:scaleX(0.937);font-kerning:none;">01.02.2024 12:55:14</span>
<span class=t style="left:1127.8px;top:583.7px;font-size:23px;color:#42424e;transform:scaleX(0.949);">Контроль приложений</span>
<span class=t style="left:1430.5px;top:583.7px;font-size:23px;color:#42424e;transform:scaleX(0.940);">1</span>
<span class=t style="left:1529.0px;top:583.7px;font-size:23px;color:#42424e;transform:scaleX(0.947);">Интерфейс em1 Источник: 10.0.2.202:3389 Приёмник: 172.169.1.130:52854 Протокол <span style="letter-spacing:1.6px">...</span></span>
<div style="left:643px;top:613.31px;width:238px;height:31.6px;background:#f6f6f6;"></div>
<svg style="left:613px;top:617.31px" width="20" height="24" ><use href="#bolt"/></svg>
<span class=t style="left:648.5px;top:617.7px;font-size:23px;color:#42424e;transform:scaleX(0.937);font-kerning:none;">01.02.2024 15:55:14</span>
<span class=t style="left:888.5px;top:617.7px;font-size:23px;color:#42424e;transform:scaleX(0.937);font-kerning:none;">01.02.2024 12:55:14</span>
<span class=t style="left:1127.8px;top:617.7px;font-size:23px;color:#42424e;transform:scaleX(0.949);">Контроль приложений</span>
<span class=t style="left:1430.5px;top:617.7px;font-size:23px;color:#42424e;transform:scaleX(0.940);">1</span>
<span class=t style="left:1529.0px;top:617.7px;font-size:23px;color:#42424e;transform:scaleX(0.947);">Интерфейс em1 Источник: 10.0.2.202:3389 Приёмник: 172.169.1.130:49688 Протокол <span style="letter-spacing:1.6px">...</span></span>
<div style="left:603px;top:647.355px;width:38px;height:31.6px;background:#f2f2f2;"></div>
<div style="left:643px;top:647.355px;width:238px;height:31.6px;background:#f2f2f2;"></div>
<div style="left:883px;top:647.355px;width:238px;height:31.6px;background:#f2f2f2;"></div>
<div style="left:1123px;top:647.355px;width:299px;height:31.6px;background:#f2f2f2;"></div>
<div style="left:1424px;top:647.355px;width:98px;height:31.6px;background:#f2f2f2;"></div>
<div style="left:1524px;top:647.355px;width:898px;height:31.6px;background:#f2f2f2;"></div>
<svg style="left:613px;top:651.355px" width="20" height="24" ><use href="#bolt"/></svg>
<span class=t style="left:648.5px;top:651.8px;font-size:23px;color:#42424e;transform:scaleX(0.937);font-kerning:none;">02.02.2024 11:33:47</span>
<span class=t style="left:888.5px;top:651.8px;font-size:23px;color:#42424e;transform:scaleX(0.937);font-kerning:none;">02.02.2024 08:33:47</span>
<span class=t style="left:1127.8px;top:651.8px;font-size:23px;color:#42424e;transform:scaleX(0.948);">Сигнатурный анализатор</span>
<span class=t style="left:1430.5px;top:651.8px;font-size:23px;color:#42424e;transform:scaleX(0.940);">1</span>
<span class=t style="left:1529.0px;top:651.8px;font-size:23px;color:#42424e;transform:scaleX(0.952);">Источник: 172.169.1.130:0 Приёмник: 10.0.2.202:0 Протокол: ICMP Класс: Misc activit<span style="letter-spacing:1.6px">...</span></span>
<div style="left:643px;top:681.4000000000001px;width:238px;height:31.6px;background:#f6f6f6;"></div>
<svg style="left:613px;top:685.4000000000001px" width="20" height="24" ><use href="#bolt"/></svg>
<span class=t style="left:648.5px;top:685.8px;font-size:23px;color:#42424e;transform:scaleX(0.937);font-kerning:none;">02.02.2024 11:33:48</span>
<span class=t style="left:888.5px;top:685.8px;font-size:23px;color:#42424e;transform:scaleX(0.937);font-kerning:none;">02.02.2024 08:33:48</span>
<span class=t style="left:1127.8px;top:685.8px;font-size:23px;color:#42424e;transform:scaleX(0.948);">Сигнатурный анализатор</span>
<span class=t style="left:1430.5px;top:685.8px;font-size:23px;color:#42424e;transform:scaleX(0.940);">1</span>
<span class=t style="left:1529.0px;top:685.8px;font-size:23px;color:#42424e;transform:scaleX(0.952);">Источник: 172.169.1.130:0 Приёмник: 10.0.2.202:0 Протокол: ICMP Класс: Misc activit<span style="letter-spacing:1.6px">...</span></span>
<div style="left:603px;top:715.4449999999999px;width:38px;height:31.6px;background:#f2f2f2;"></div>
<div style="left:643px;top:715.4449999999999px;width:238px;height:31.6px;background:#f2f2f2;"></div>
<div style="left:883px;top:715.4449999999999px;width:238px;height:31.6px;background:#f2f2f2;"></div>
<div style="left:1123px;top:715.4449999999999px;width:299px;height:31.6px;background:#f2f2f2;"></div>
<div style="left:1424px;top:715.4449999999999px;width:98px;height:31.6px;background:#f2f2f2;"></div>
<div style="left:1524px;top:715.4449999999999px;width:898px;height:31.6px;background:#f2f2f2;"></div>
<svg style="left:613px;top:719.4449999999999px" width="20" height="24" ><use href="#bolt"/></svg>
<span class=t style="left:648.5px;top:719.9px;font-size:23px;color:#42424e;transform:scaleX(0.937);font-kerning:none;">02.02.2024 11:33:49</span>
<span class=t style="left:888.5px;top:719.9px;font-size:23px;color:#42424e;transform:scaleX(0.937);font-kerning:none;">02.02.2024 08:33:49</span>
<span class=t style="left:1127.8px;top:719.9px;font-size:23px;color:#42424e;transform:scaleX(0.948);">Сигнатурный анализатор</span>
<span class=t style="left:1430.5px;top:719.9px;font-size:23px;color:#42424e;transform:scaleX(0.940);">1</span>
<span class=t style="left:1529.0px;top:719.9px;font-size:23px;color:#42424e;transform:scaleX(0.952);">Источник: 172.169.1.130:0 Приёмник: 10.0.2.202:0 Протокол: ICMP Класс: Misc activit<span style="letter-spacing:1.6px">...</span></span>
<div style="left:643px;top:749.49px;width:238px;height:31.6px;background:#f6f6f6;"></div>
<svg style="left:613px;top:753.49px" width="20" height="24" ><use href="#bolt"/></svg>
<span class=t style="left:648.5px;top:753.9px;font-size:23px;color:#42424e;transform:scaleX(0.937);font-kerning:none;">02.02.2024 11:33:50</span>
<span class=t style="left:888.5px;top:753.9px;font-size:23px;color:#42424e;transform:scaleX(0.937);font-kerning:none;">02.02.2024 08:33:50</span>
<span class=t style="left:1127.8px;top:753.9px;font-size:23px;color:#42424e;transform:scaleX(0.948);">Сигнатурный анализатор</span>
<span class=t style="left:1430.5px;top:753.9px;font-size:23px;color:#42424e;transform:scaleX(0.940);">1</span>
<span class=t style="left:1529.0px;top:753.9px;font-size:23px;color:#42424e;transform:scaleX(0.952);">Источник: 172.169.1.130:0 Приёмник: 10.0.2.202:0 Протокол: ICMP Класс: Misc activit<span style="letter-spacing:1.6px">...</span></span>
<div style="left:603px;top:783.5350000000001px;width:38px;height:31.6px;background:#f2f2f2;"></div>
<div style="left:643px;top:783.5350000000001px;width:238px;height:31.6px;background:#f2f2f2;"></div>
<div style="left:883px;top:783.5350000000001px;width:238px;height:31.6px;background:#f2f2f2;"></div>
<div style="left:1123px;top:783.5350000000001px;width:299px;height:31.6px;background:#f2f2f2;"></div>
<div style="left:1424px;top:783.5350000000001px;width:98px;height:31.6px;background:#f2f2f2;"></div>
<div style="left:1524px;top:783.5350000000001px;width:898px;height:31.6px;background:#f2f2f2;"></div>
<svg style="left:613px;top:787.5350000000001px" width="20" height="24" ><use href="#bolt"/></svg>
<span class=t style="left:648.5px;top:788.0px;font-size:23px;color:#42424e;transform:scaleX(0.937);font-kerning:none;">02.02.2024 11:33:51</span>
<span class=t style="left:888.5px;top:788.0px;font-size:23px;color:#42424e;transform:scaleX(0.937);font-kerning:none;">02.02.2024 08:33:51</span>
<span class=t style="left:1127.8px;top:788.0px;font-size:23px;color:#42424e;transform:scaleX(0.948);">Сигнатурный анализатор</span>
<span class=t style="left:1430.5px;top:788.0px;font-size:23px;color:#42424e;transform:scaleX(0.940);">1</span>
<span class=t style="left:1529.0px;top:788.0px;font-size:23px;color:#42424e;transform:scaleX(0.952);">Источник: 172.169.1.130:0 Приёмник: 10.0.2.202:0 Протокол: ICMP Класс: Misc activit<span style="letter-spacing:1.6px">...</span></span>
<div style="left:643px;top:817.5799999999999px;width:238px;height:31.6px;background:#f6f6f6;"></div>
<svg style="left:613px;top:821.5799999999999px" width="20" height="24" ><use href="#bolt"/></svg>
<span class=t style="left:648.5px;top:822.0px;font-size:23px;color:#42424e;transform:scaleX(0.937);font-kerning:none;">02.02.2024 11:33:52</span>
<span class=t style="left:888.5px;top:822.0px;font-size:23px;color:#42424e;transform:scaleX(0.937);font-kerning:none;">02.02.2024 08:33:52</span>
<span class=t style="left:1127.8px;top:822.0px;font-size:23px;color:#42424e;transform:scaleX(0.948);">Сигнатурный анализатор</span>
<span class=t style="left:1430.5px;top:822.0px;font-size:23px;color:#42424e;transform:scaleX(0.940);">1</span>
<span class=t style="left:1529.0px;top:822.0px;font-size:23px;color:#42424e;transform:scaleX(0.952);">Источник: 172.169.1.130:0 Приёмник: 10.0.2.202:0 Протокол: ICMP Класс: Misc activit<span style="letter-spacing:1.6px">...</span></span>
<div style="left:603px;top:851.625px;width:38px;height:31.6px;background:#f2f2f2;"></div>
<div style="left:643px;top:851.625px;width:238px;height:31.6px;background:#f2f2f2;"></div>
<div style="left:883px;top:851.625px;width:238px;height:31.6px;background:#f2f2f2;"></div>
<div style="left:1123px;top:851.625px;width:299px;height:31.6px;background:#f2f2f2;"></div>
<div style="left:1424px;top:851.625px;width:98px;height:31.6px;background:#f2f2f2;"></div>
<div style="left:1524px;top:851.625px;width:898px;height:31.6px;background:#f2f2f2;"></div>
<svg style="left:613px;top:855.625px" width="20" height="24" ><use href="#bolt"/></svg>
<span class=t style="left:648.5px;top:856.1px;font-size:23px;color:#42424e;transform:scaleX(0.937);font-kerning:none;">02.02.2024 11:33:53</span>
<span class=t style="left:888.5px;top:856.1px;font-size:23px;color:#42424e;transform:scaleX(0.937);font-kerning:none;">02.02.2024 08:33:53</span>
<span class=t style="left:1127.8px;top:856.1px;font-size:23px;color:#42424e;transform:scaleX(0.948);">Сигнатурный анализатор</span>
<span class=t style="left:1430.5px;top:856.1px;font-size:23px;color:#42424e;transform:scaleX(0.940);">1</span>
<span class=t style="left:1529.0px;top:856.1px;font-size:23px;color:#42424e;transform:scaleX(0.952);">Источник: 172.169.1.130:0 Приёмник: 10.0.2.202:0 Протокол: ICMP Класс: Misc activit<span style="letter-spacing:1.6px">...</span></span>
<div style="left:643px;top:885.6700000000001px;width:238px;height:31.6px;background:#f6f6f6;"></div>
<svg style="left:613px;top:889.6700000000001px" width="20" height="24" ><use href="#bolt"/></svg>
<span class=t style="left:648.5px;top:890.1px;font-size:23px;color:#42424e;transform:scaleX(0.937);font-kerning:none;">02.02.2024 11:33:54</span>
<span class=t style="left:888.5px;top:890.1px;font-size:23px;color:#42424e;transform:scaleX(0.937);font-kerning:none;">02.02.2024 08:33:54</span>
<span class=t style="left:1127.8px;top:890.1px;font-size:23px;color:#42424e;transform:scaleX(0.948);">Сигнатурный анализатор</span>
<span class=t style="left:1430.5px;top:890.1px;font-size:23px;color:#42424e;transform:scaleX(0.940);">1</span>
<span class=t style="left:1529.0px;top:890.1px;font-size:23px;color:#42424e;transform:scaleX(0.952);">Источник: 172.169.1.130:0 Приёмник: 10.0.2.202:0 Протокол: ICMP Класс: Misc activit<span style="letter-spacing:1.6px">...</span></span>
<div style="left:603px;top:919.7149999999999px;width:38px;height:31.6px;background:#f2f2f2;"></div>
<div style="left:643px;top:919.7149999999999px;width:238px;height:31.6px;background:#f2f2f2;"></div>
<div style="left:883px;top:919.7149999999999px;width:238px;height:31.6px;background:#f2f2f2;"></div>
<div style="left:1123px;top:919.7149999999999px;width:299px;height:31.6px;background:#f2f2f2;"></div>
<div style="left:1424px;top:919.7149999999999px;width:98px;height:31.6px;background:#f2f2f2;"></div>
<div style="left:1524px;top:919.7149999999999px;width:898px;height:31.6px;background:#f2f2f2;"></div>
<svg style="left:613px;top:923.7149999999999px" width="20" height="24" ><use href="#bolt"/></svg>
<span class=t style="left:648.5px;top:924.1px;font-size:23px;color:#42424e;transform:scaleX(0.937);font-kerning:none;">02.02.2024 11:33:55</span>
<span class=t style="left:888.5px;top:924.1px;font-size:23px;color:#42424e;transform:scaleX(0.937);font-kerning:none;">02.02.2024 08:33:55</span>
<span class=t style="left:1127.8px;top:924.1px;font-size:23px;color:#42424e;transform:scaleX(0.948);">Сигнатурный анализатор</span>
<span class=t style="left:1430.5px;top:924.1px;font-size:23px;color:#42424e;transform:scaleX(0.940);">1</span>
<span class=t style="left:1529.0px;top:924.1px;font-size:23px;color:#42424e;transform:scaleX(0.952);">Источник: 172.169.1.130:0 Приёмник: 10.0.2.202:0 Протокол: ICMP Класс: Misc activit<span style="letter-spacing:1.6px">...</span></span>
<div style="left:643px;top:953.76px;width:238px;height:31.6px;background:#f6f6f6;"></div>
<svg style="left:613px;top:957.76px" width="20" height="24" ><use href="#bolt"/></svg>
<span class=t style="left:648.5px;top:958.2px;font-size:23px;color:#42424e;transform:scaleX(0.937);font-kerning:none;">02.02.2024 11:33:56</span>
<span class=t style="left:888.5px;top:958.2px;font-size:23px;color:#42424e;transform:scaleX(0.937);font-kerning:none;">02.02.2024 08:33:56</span>
<span class=t style="left:1127.8px;top:958.2px;font-size:23px;color:#42424e;transform:scaleX(0.948);">Сигнатурный анализатор</span>
<span class=t style="left:1430.5px;top:958.2px;font-size:23px;color:#42424e;transform:scaleX(0.940);">1</span>
<span class=t style="left:1529.0px;top:958.2px;font-size:23px;color:#42424e;transform:scaleX(0.952);">Источник: 172.169.1.130:0 Приёмник: 10.0.2.202:0 Протокол: ICMP Класс: Misc activit<span style="letter-spacing:1.6px">...</span></span>
<div style="left:603px;top:987.8050000000001px;width:38px;height:31.6px;background:#f2f2f2;"></div>
<div style="left:643px;top:987.8050000000001px;width:238px;height:31.6px;background:#f2f2f2;"></div>
<div style="left:883px;top:987.8050000000001px;width:238px;height:31.6px;background:#f2f2f2;"></div>
<div style="left:1123px;top:987.8050000000001px;width:299px;height:31.6px;background:#f2f2f2;"></div>
<div style="left:1424px;top:987.8050000000001px;width:98px;height:31.6px;background:#f2f2f2;"></div>
<div style="left:1524px;top:987.8050000000001px;width:898px;height:31.6px;background:#f2f2f2;"></div>
<svg style="left:613px;top:991.8050000000001px" width="20" height="24" ><use href="#bolt"/></svg>
<span class=t style="left:648.5px;top:992.2px;font-size:23px;color:#42424e;transform:scaleX(0.937);font-kerning:none;">02.02.2024 11:33:57</span>
<span class=t style="left:888.5px;top:992.2px;font-size:23px;color:#42424e;transform:scaleX(0.937);font-kerning:none;">02.02.2024 08:33:57</span>
<span class=t style="left:1127.8px;top:992.2px;font-size:23px;color:#42424e;transform:scaleX(0.948);">Сигнатурный анализатор</span>
<span class=t style="left:1430.5px;top:992.2px;font-size:23px;color:#42424e;transform:scaleX(0.940);">1</span>
<span class=t style="left:1529.0px;top:992.2px;font-size:23px;color:#42424e;transform:scaleX(0.952);">Источник: 172.169.1.130:0 Приёмник: 10.0.2.202:0 Протокол: ICMP Класс: Misc activit<span style="letter-spacing:1.6px">...</span></span>
<div style="left:601px;top:1021.8500000000001px;width:1821px;height:32px;background:#dcdcdc;"></div>
<div style="left:603px;top:1022.8500000000001px;width:38px;height:30px;background:#cbcbcb;"></div>
<div style="left:643px;top:1022.8500000000001px;width:238px;height:30px;background:#cbcbcb;"></div>
<div style="left:883px;top:1022.8500000000001px;width:238px;height:30px;background:#cbcbcb;"></div>
<div style="left:1123px;top:1022.8500000000001px;width:299px;height:30px;background:#cbcbcb;"></div>
<div style="left:1424px;top:1022.8500000000001px;width:98px;height:30px;background:#cbcbcb;"></div>
<div style="left:1524px;top:1022.8500000000001px;width:898px;height:30px;background:#cbcbcb;"></div>
<div style="left:601px;top:1021.9px;width:1817px;height:28px;border:2px dotted #1a1a1a"></div>
<svg style="left:613px;top:1025.8500000000001px" width="20" height="24" ><use href="#bolt"/></svg>
<span class=t style="left:648.5px;top:1026.3px;font-size:23px;color:#42424e;transform:scaleX(0.937);font-kerning:none;">02.02.2024 11:33:59</span>
<span class=t style="left:888.5px;top:1026.3px;font-size:23px;color:#42424e;transform:scaleX(0.937);font-kerning:none;">02.02.2024 08:33:59</span>
<span class=t style="left:1127.8px;top:1026.3px;font-size:23px;color:#42424e;transform:scaleX(0.948);">Сигнатурный анализатор</span>
<span class=t style="left:1430.5px;top:1026.3px;font-size:23px;color:#42424e;transform:scaleX(0.940);">1</span>
<span class=t style="left:1529.0px;top:1026.3px;font-size:23px;color:#42424e;transform:scaleX(0.950);">Источник: 172.169.1.130:49716 Приёмник: 10.0.2.202:3389 Протокол: TCP Класс: Mis<span style="letter-spacing:1.6px">...</span></span>
<div style="left:603px;top:1055.895px;width:38px;height:31.6px;background:#f2f2f2;"></div>
<div style="left:643px;top:1055.895px;width:238px;height:31.6px;background:#f2f2f2;"></div>
<div style="left:883px;top:1055.895px;width:238px;height:31.6px;background:#f2f2f2;"></div>
<div style="left:1123px;top:1055.895px;width:299px;height:31.6px;background:#f2f2f2;"></div>
<div style="left:1424px;top:1055.895px;width:98px;height:31.6px;background:#f2f2f2;"></div>
<div style="left:1524px;top:1055.895px;width:898px;height:31.6px;background:#f2f2f2;"></div>
<svg style="left:613px;top:1059.895px" width="20" height="24" ><use href="#bolt"/></svg>
<span class=t style="left:648.5px;top:1060.3px;font-size:23px;color:#42424e;transform:scaleX(0.937);font-kerning:none;">02.02.2024 11:33:59</span>
<span class=t style="left:888.5px;top:1060.3px;font-size:23px;color:#42424e;transform:scaleX(0.937);font-kerning:none;">02.02.2024 08:33:59</span>
<span class=t style="left:1127.8px;top:1060.3px;font-size:23px;color:#42424e;transform:scaleX(0.949);">Контроль приложений</span>
<span class=t style="left:1430.5px;top:1060.3px;font-size:23px;color:#42424e;transform:scaleX(0.940);">1</span>
<span class=t style="left:1529.0px;top:1060.3px;font-size:23px;color:#42424e;transform:scaleX(0.947);">Интерфейс em1 Источник: 10.0.2.202:3389 Приёмник: 172.169.1.130:49716 Протокол <span style="letter-spacing:1.6px">...</span></span>
<div style="left:643px;top:1089.94px;width:238px;height:31.6px;background:#f6f6f6;"></div>
<svg style="left:613px;top:1093.94px" width="20" height="24" ><use href="#bolt"/></svg>
<span class=t style="left:648.5px;top:1094.4px;font-size:23px;color:#42424e;transform:scaleX(0.937);font-kerning:none;">02.02.2024 11:34:11</span>
<span class=t style="left:888.5px;top:1094.4px;font-size:23px;color:#42424e;transform:scaleX(0.937);font-kerning:none;">02.02.2024 08:34:11</span>
<span class=t style="left:1127.8px;top:1094.4px;font-size:23px;color:#42424e;transform:scaleX(0.949);">Контроль приложений</span>
<span class=t style="left:1430.5px;top:1094.4px;font-size:23px;color:#42424e;transform:scaleX(0.940);">1</span>
<span class=t style="left:1529.0px;top:1094.4px;font-size:23px;color:#42424e;transform:scaleX(0.947);">Интерфейс em1 Источник: 10.0.2.202:3389 Приёмник: 172.169.1.130:51949 Протокол <span style="letter-spacing:1.6px">...</span></span>
<div style="left:3px;top:1416px;width:2729px;height:40px;background:#f1f1f1;"></div>
<span class=t style="left:15.0px;top:1427.7px;font-size:21px;color:#3a3a3a;transform:scaleX(1.095);">Готово</span>
<span class=t style="left:2189.5px;top:1428.2px;font-size:21px;color:#3a3a3a;transform:scaleX(1.060);">Страница: 1</span>
<span class=t style="left:2340.9px;top:1428.2px;font-size:21px;color:#3a3a3a;transform:scaleX(1.088);">Загружено записей: 23</span>
<div style="left:2718px;top:1434px;width:4px;height:4px;background:#bdbdbd;"></div>
<div style="left:2712px;top:1440px;width:4px;height:4px;background:#bdbdbd;"></div>
<div style="left:2718px;top:1440px;width:4px;height:4px;background:#bdbdbd;"></div>
<div style="left:2706px;top:1446px;width:4px;height:4px;background:#bdbdbd;"></div>
<div style="left:2712px;top:1446px;width:4px;height:4px;background:#bdbdbd;"></div>
<div style="left:2718px;top:1446px;width:4px;height:4px;background:#bdbdbd;"></div>
</body></html>
